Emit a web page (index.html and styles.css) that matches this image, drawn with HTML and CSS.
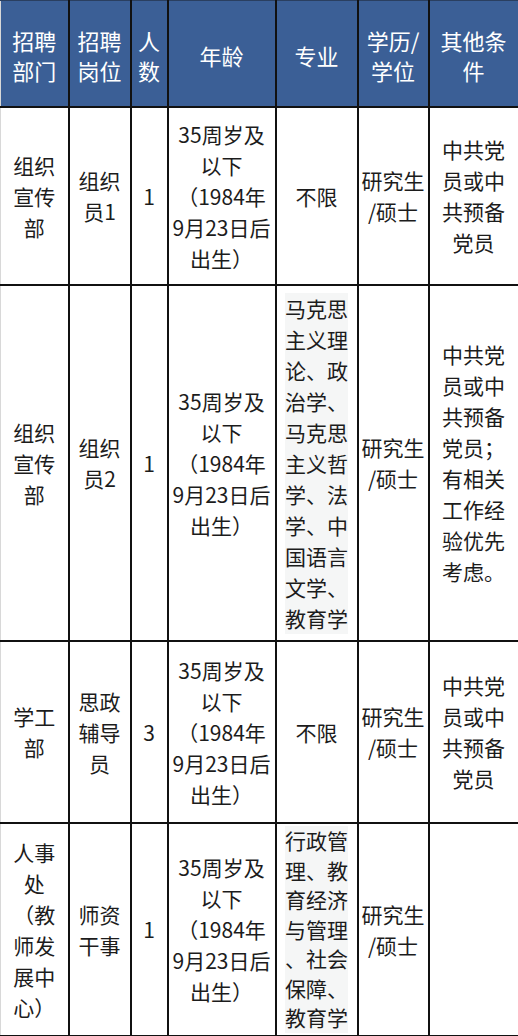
FILE: index.html
```html
<!DOCTYPE html>
<html lang="zh-CN">
<head>
<meta charset="utf-8">
<title>招聘岗位</title>
<link rel="stylesheet" href="styles.css">
</head>
<body>
<table class="jobs">
  <colgroup>
    <col class="c1"><col class="c2"><col class="c3"><col class="c4"><col class="c5"><col class="c6"><col class="c7">
  </colgroup>
  <thead>
    <tr class="head">
      <th>招聘<br>部门</th>
      <th>招聘<br>岗位</th>
      <th>人<br>数</th>
      <th>年龄</th>
      <th>专业</th>
      <th>学历/<br>学位</th>
      <th>其他条<br>件</th>
    </tr>
  </thead>
  <tbody>
    <tr class="r1">
      <td>组织<br>宣传<br>部</td>
      <td>组织<br>员1</td>
      <td>1</td>
      <td>35周岁及<br>以下<br>（1984年<br>9月23日后<br>出生）</td>
      <td>不限</td>
      <td>研究生<br>/硕士</td>
      <td>中共党<br>员或中<br>共预备<br>党员</td>
    </tr>
    <tr class="r2">
      <td>组织<br>宣传<br>部</td>
      <td>组织<br>员2</td>
      <td>1</td>
      <td>35周岁及<br>以下<br>（1984年<br>9月23日后<br>出生）</td>
      <td><span class="major">马克思<br>主义理<br>论、政<br>治学、<br>马克思<br>主义哲<br>学、法<br>学、中<br>国语言<br>文学、<br>教育学</span></td>
      <td>研究生<br>/硕士</td>
      <td>中共党<br>员或中<br>共预备<br>党员；<br>有相关<br>工作经<br>验优先<br>考虑。</td>
    </tr>
    <tr class="r3">
      <td>学工<br>部</td>
      <td>思政<br>辅导<br>员</td>
      <td>3</td>
      <td>35周岁及<br>以下<br>（1984年<br>9月23日后<br>出生）</td>
      <td>不限</td>
      <td>研究生<br>/硕士</td>
      <td>中共党<br>员或中<br>共预备<br>党员</td>
    </tr>
    <tr class="r4">
      <td>人事<br>处<br>（教<br>师发<br>展中<br>心）</td>
      <td>师资<br>干事</td>
      <td>1</td>
      <td>35周岁及<br>以下<br>（1984年<br>9月23日后<br>出生）</td>
      <td><span class="major">行政管<br>理、教<br>育经济<br>与管理<br>、社会<br>保障、<br>教育学</span></td>
      <td>研究生<br>/硕士</td>
      <td></td>
    </tr>
  </tbody>
</table>
</body>
</html>
```
FILE: styles.css
```css
html, body {
  margin: 0;
  padding: 0;
  background: #ffffff;
}

body {
  width: 518px;
  height: 1036px;
  overflow: hidden;
  font-family: "Noto Sans CJK SC", "Noto Sans", sans-serif;
  color: #1c1c1c;
}

.jobs {
  width: 518px;
  border-collapse: collapse;
  table-layout: fixed;
}

.c1 { width: 68px; }
.c2 { width: 62px; }
.c3 { width: 37px; }
.c4 { width: 108px; }
.c5 { width: 82px; }
.c6 { width: 71px; }
.c7 { width: 90px; }

.jobs th,
.jobs td {
  border: 2px solid #111111;
  padding: 0;
  text-align: center;
  vertical-align: middle;
  white-space: nowrap;
  font-size: 21px;
}

.jobs th:first-child,
.jobs td:first-child {
  border-left: 1px solid #d8d8d8;
}

.head th {
  background: #3b5f96;
  color: #ffffff;
  font-weight: normal;
  font-size: 22px;
  line-height: 30px;
  height: 103px;
  padding-top: 2px;
  border-top: 1px solid #2a3f60;
}

.jobs td {
  line-height: 31px;
}

.r1 td { height: 176px; }
.r2 td { height: 354px; }
.r3 td { height: 180px; }
.r4 td { height: 211px; }

.major {
  display: inline-block;
  background: #f5f6f6;
  line-height: 31px;
}

.r4 .major {
  line-height: 29.5px;
}
```
